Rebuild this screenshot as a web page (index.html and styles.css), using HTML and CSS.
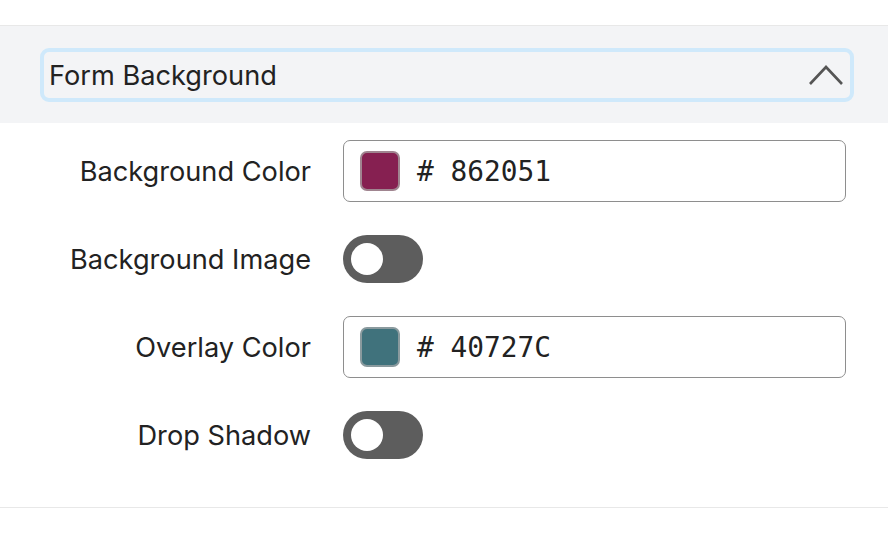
FILE: index.html
```html
<!DOCTYPE html>
<html lang="en">
<head>
	<meta charset="utf-8">
	<title>Form Background</title>
	<link rel="stylesheet" href="styles.css">
</head>
<body>
	<div class="topGap"></div>
	<div class="panelHead">
		<button class="headBtn">
			<span>Form Background</span>
			<svg class="chevron" width="36" height="22" viewBox="0 0 36 22"><path d="M2 20 L18 3 L34 20" fill="none" stroke="#555" stroke-width="2.6"/></svg>
		</button>
	</div>
	<div class="panelBody">
		<div class="row">
			<label class="rowLabel">Background Color</label>
			<div class="colorInput">
				<span class="swatch swatchA"></span>
				<span class="hex"># 862051</span>
			</div>
		</div>
		<div class="row">
			<label class="rowLabel">Background Image</label>
			<div class="toggle"><span class="knob"></span></div>
		</div>
		<div class="row">
			<label class="rowLabel">Overlay Color</label>
			<div class="colorInput">
				<span class="swatch swatchB"></span>
				<span class="hex"># 40727C</span>
			</div>
		</div>
		<div class="row">
			<label class="rowLabel">Drop Shadow</label>
			<div class="toggle"><span class="knob"></span></div>
		</div>
	</div>
</body>
</html>
```

FILE: styles.css
```css
body{
	margin: 0;
	background: #fff;
	font-family: Inter, "Noto Sans", sans-serif;
	color: #222;
}
.topGap{
	height: 25px;
	border-bottom: 1px solid #e8e8e8;
}
.panelHead{
	height: 97px;
	background: #f3f4f6;
	padding: 22px 34px 0 40px;
	box-sizing: border-box;
}
.headBtn{
	display: flex;
	align-items: center;
	justify-content: space-between;
	width: 100%;
	height: 54px;
	margin: 0;
	padding: 0 6px 0 5px;
	box-sizing: border-box;
	background: #f3f4f6;
	border: 4px solid #cfe9fb;
	border-radius: 9px;
	font: 27.2px Inter, "Noto Sans", sans-serif;
	color: #222;
}
.chevron{
	display: block;
}
.panelBody{
	display: grid;
	grid-template-columns: 311px 1fr;
	grid-auto-rows: 62px;
	column-gap: 32px;
	row-gap: 26px;
	padding: 17px 42px 41px 0;
	border-bottom: 1px solid #e8e8e8;
}
.row{
	display: contents;
}
.rowLabel{
	align-self: center;
	text-align: right;
	font-size: 27.2px;
}
.colorInput{
	display: flex;
	align-items: center;
	gap: 17px;
	padding: 0 16px;
	border: 1.5px solid #8e8e8e;
	border-radius: 7px;
}
.swatch{
	width: 40px;
	height: 40px;
	box-sizing: border-box;
	border: 2px solid #999;
	border-radius: 7px;
}
.swatchA{
	background: #862051;
	border-color: #a08590;
}
.swatchB{
	background: #40727c;
	border-color: #8a9a9e;
}
.hex{
	font: 27.8px "DejaVu Sans Mono", monospace;
	color: #222;
}
.toggle{
	align-self: center;
	display: flex;
	align-items: center;
	width: 80px;
	height: 48px;
	padding: 0 8px;
	box-sizing: border-box;
	background: #5d5d5d;
	border-radius: 24px;
}
.knob{
	width: 32px;
	height: 32px;
	background: #fff;
	border-radius: 50%;
}
```
